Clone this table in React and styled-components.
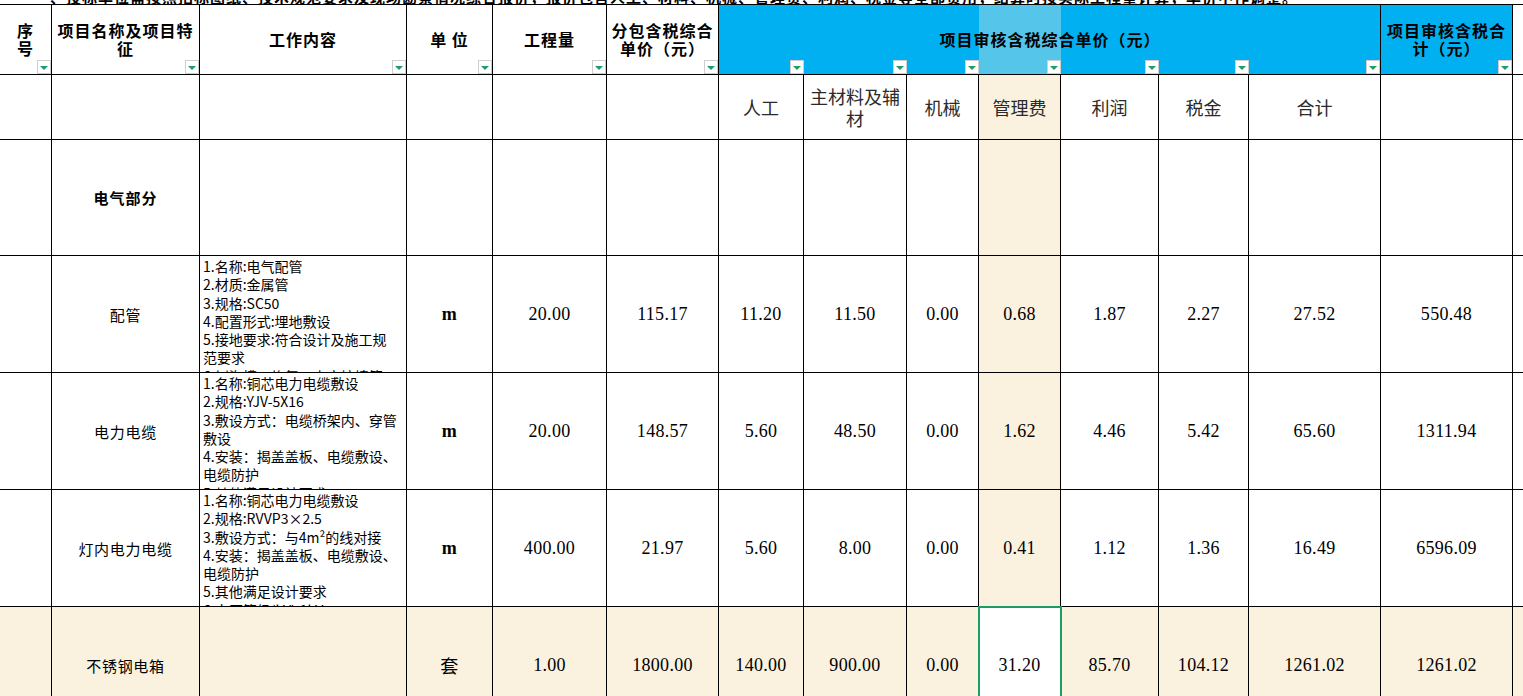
import React from 'react';
import styled, { createGlobalStyle } from 'styled-components';

const GlobalStyle = createGlobalStyle`
  html, body {
    margin: 0;
    padding: 0;
    background: #fff;
    overflow: hidden;
  }
  body {
    font-family: "Noto Sans CJK SC", "Noto Sans", sans-serif;
    color: #000;
  }
`;

const COLS = '52px 148px 207px 86px 114px 112px 85px 103px 72px 82px 98px 90px 132px 132px 60px';
const BLUE = '#00b0f0';
const BLUE_SEL = '#55c5ea';
const BEIGE = '#faf1df';

const Sheet = styled.div`
  width: 1523px;
  height: 696px;
  overflow: hidden;
`;

const TitleStrip = styled.div`
  height: 4px;
  overflow: hidden;
  display: flex;
  align-items: flex-end;
  padding-left: 34px;
  font-size: 15px;
  font-weight: 700;
  line-height: 15px;
  white-space: nowrap;
  letter-spacing: 1px;
`;

const Under = styled.span`
  text-decoration: underline;
`;

const Table = styled.div`
  border-top: 1px solid #000;
`;

const Row = styled.div`
  display: grid;
  grid-template-columns: ${COLS};
  height: ${(p) => p.$h}px;
  background: ${(p) => p.$bg || '#fff'};
`;

const Cell = styled.div`
  box-sizing: border-box;
  min-width: 0;
  border-right: ${(p) => (p.$noRight ? 'none' : '1px solid #000')};
  border-bottom: 1px solid #000;
  background: ${(p) => p.$bg || 'transparent'};
  display: flex;
  align-items: center;
  justify-content: center;
  text-align: center;
  overflow: hidden;
`;

const HeadCell = styled(Cell)`
  grid-row: 1;
  grid-column: ${(p) => p.$col};
  position: relative;
  font-size: 16px;
  font-weight: 700;
  letter-spacing: 1px;
  line-height: 18px;
  padding-bottom: 2px;
`;

const MergedTitle = styled.div`
  grid-row: 1;
  grid-column: 7 / 14;
  z-index: 1;
  display: flex;
  align-items: center;
  justify-content: center;
  font-size: 16px;
  font-weight: 700;
  letter-spacing: 1px;
  padding-bottom: 2px;
`;

const Drop = styled.span`
  position: absolute;
  right: 0;
  bottom: 0;
  width: 14px;
  height: 14px;
  box-sizing: border-box;
  background: #fff;
  border: 1px solid #cfcfcf;
  display: flex;
  align-items: center;
  justify-content: center;
  z-index: 2;
  &::after {
    content: '';
    margin-top: 1px;
    border-left: 4px solid transparent;
    border-right: 4px solid transparent;
    border-top: 4px solid #1f9c67;
  }
`;

const SubHead = styled(Cell)`
  font-size: 18px;
  line-height: 22px;
  color: #2a2a2a;
`;

const GroupName = styled(Cell)`
  font-size: 15px;
  font-weight: 700;
  letter-spacing: 1px;
`;

const NameCell = styled(Cell)`
  font-size: 15px;
  letter-spacing: 0.7px;
`;

const WorkCell = styled(Cell)`
  flex-direction: column;
  align-items: flex-start;
  justify-content: flex-start;
  padding: 1px 3px 0;
  font-size: 14px;
  line-height: 18.3px;
  text-align: left;
`;

const WorkLine = styled.div`
  white-space: nowrap;
`;

const NumCell = styled(Cell)`
  font-family: "Liberation Serif", "Noto Sans CJK SC", serif;
  font-size: 18px;
  letter-spacing: 0.3px;
  position: relative;
  z-index: ${(p) => (p.$selected ? 1 : 0)};
  outline: ${(p) => (p.$selected ? '2px solid #1e9b66' : 'none')};
  outline-offset: -1px;
`;

const UnitCell = styled(NumCell)`
  font-family: "Liberation Serif", "Noto Sans CJK SC", serif;
  font-weight: ${(p) => (p.$bold ? 700 : 400)};
`;

const headers = [
  { col: 1, text: ['序', '号'] },
  { col: 2, text: ['项目名称及项目特', '征'] },
  { col: 3, text: ['工作内容'] },
  { col: 4, text: ['单 位'] },
  { col: 5, text: ['工程量'] },
  { col: 6, text: ['分包含税综合', '单价（元）'] },
];

const blueCols = [7, 8, 9, 10, 11, 12, 13];

const subHeads = [
  { text: ['人工'] },
  { text: ['主材料及辅', '材'] },
  { text: ['机械'] },
  { text: ['管理费'], bg: BEIGE },
  { text: ['利润'] },
  { text: ['税金'] },
  { text: ['合计'] },
];

const items = [
  {
    name: '配管',
    work: [
      '1.名称:电气配管',
      '2.材质:金属管',
      '3.规格:SC50',
      '4.配置形式:埋地敷设',
      '5.接地要求:符合设计及施工规',
      '范要求',
      '6.刨沟槽、修复、土方挖填等',
    ],
    unit: 'm',
    qty: '20.00',
    sub: '115.17',
    vals: ['11.20', '11.50', '0.00', '0.68', '1.87', '2.27', '27.52'],
    total: '550.48',
  },
  {
    name: '电力电缆',
    work: [
      '1.名称:铜芯电力电缆敷设',
      '2.规格:YJV-5X16',
      '3.敷设方式：电缆桥架内、穿管',
      '敷设',
      '4.安装：揭盖盖板、电缆敷设、',
      '电缆防护',
      '5.其他满足设计要求',
    ],
    unit: 'm',
    qty: '20.00',
    sub: '148.57',
    vals: ['5.60', '48.50', '0.00', '1.62', '4.46', '5.42', '65.60'],
    total: '1311.94',
  },
  {
    name: '灯内电力电缆',
    work: [
      '1.名称:铜芯电力电缆敷设',
      '2.规格:RVVP3×2.5',
      '3.敷设方式：与4m²的线对接',
      '4.安装：揭盖盖板、电缆敷设、',
      '电缆防护',
      '5.其他满足设计要求',
      '6.电压等级(kV):1kV',
    ],
    unit: 'm',
    qty: '400.00',
    sub: '21.97',
    vals: ['5.60', '8.00', '0.00', '0.41', '1.12', '1.36', '16.49'],
    total: '6596.09',
  },
];

const boxItem = {
  name: '不锈钢电箱',
  unit: '套',
  qty: '1.00',
  sub: '1800.00',
  vals: ['140.00', '900.00', '0.00', '31.20', '85.70', '104.12', '1261.02'],
  total: '1261.02',
};

const lines = (arr) =>
  arr.map((t, i) => (
    <React.Fragment key={i}>
      {i > 0 && <br />}
      {t}
    </React.Fragment>
  ));

function ItemRow({ item, last }) {
  return (
    <Row $h={117} $bg={last ? BEIGE : '#fff'}>
      <Cell />
      <NameCell>{item.name}</NameCell>
      <WorkCell>
        {(item.work || []).map((w, i) => (
          <WorkLine key={i}>{w}</WorkLine>
        ))}
      </WorkCell>
      <UnitCell $bold={item.unit === 'm'}>{item.unit}</UnitCell>
      <NumCell>{item.qty}</NumCell>
      <NumCell>{item.sub}</NumCell>
      {item.vals.map((v, i) => (
        <NumCell
          key={i}
          $bg={i === 3 ? (last ? '#fff' : BEIGE) : undefined}
          $selected={last && i === 3}
        >
          {v}
        </NumCell>
      ))}
      <NumCell>{item.total}</NumCell>
      <Cell />
    </Row>
  );
}

export default function App() {
  return (
    <Sheet>
      <GlobalStyle />
      <TitleStrip>
        一、投标单位需按照<Under>招标图纸、技术规范要求及现场勘察情况</Under>综合报价，报价包含人工、材料、机械、管理费、利润、税金等全部费用，结算时按实际工程量计算，单价不作调整。
      </TitleStrip>
      <Table>
        <Row $h={70}>
          {headers.map((h) => (
            <HeadCell key={h.col} $col={h.col}>
              <span>{lines(h.text)}</span>
              <Drop />
            </HeadCell>
          ))}
          {blueCols.map((c) => (
            <HeadCell
              key={c}
              $col={c}
              $bg={c === 10 ? BLUE_SEL : BLUE}
              $noRight={c !== 13}
            >
              <Drop />
            </HeadCell>
          ))}
          <MergedTitle>项目审核含税综合单价（元）</MergedTitle>
          <HeadCell $col={14} $bg={BLUE}>
            <span>{lines(['项目审核含税合', '计（元）'])}</span>
            <Drop />
          </HeadCell>
          <HeadCell $col={15} />
        </Row>

        <Row $h={65}>
          <Cell />
          <Cell />
          <Cell />
          <Cell />
          <Cell />
          <Cell />
          {subHeads.map((s, i) => (
            <SubHead key={i} $bg={s.bg}>
              <span>{lines(s.text)}</span>
            </SubHead>
          ))}
          <Cell />
          <Cell />
        </Row>

        <Row $h={116}>
          <Cell />
          <GroupName>电气部分</GroupName>
          {Array.from({ length: 7 }).map((_, i) => (
            <Cell key={i} />
          ))}
          <Cell $bg={BEIGE} />
          <Cell />
          <Cell />
          <Cell />
          <Cell />
          <Cell />
        </Row>

        {items.map((it, i) => (
          <ItemRow key={i} item={it} />
        ))}
        <ItemRow item={boxItem} last />
      </Table>
    </Sheet>
  );
}
